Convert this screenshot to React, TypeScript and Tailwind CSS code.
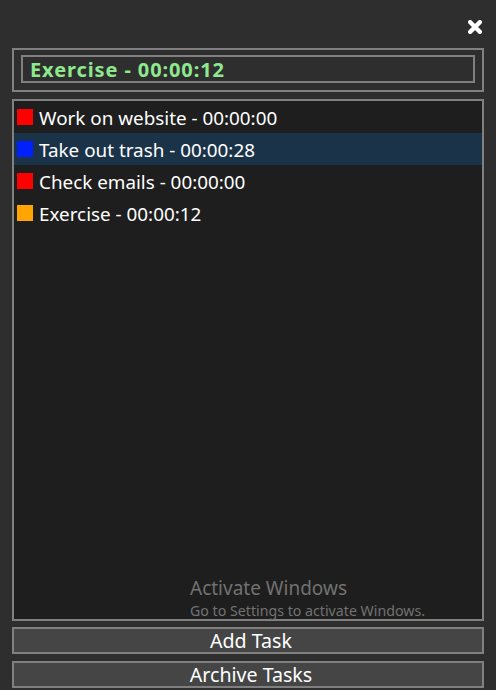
import React from "react";

const tasks = [
  { name: "Work on website - 00:00:00", color: "bg-[#ff0000]", active: false },
  { name: "Take out trash - 00:00:28", color: "bg-[#0020ff]", active: true },
  { name: "Check emails - 00:00:00", color: "bg-[#ff0000]", active: false },
  { name: "Exercise - 00:00:12", color: "bg-[#ffa500]", active: false },
];

export default function App() {
  return (
    <div
      className="w-[496px] h-[690px] overflow-hidden bg-[#2e2e2e] flex flex-col px-[12px] relative"
      style={{ fontFamily: '"Noto Sans", "Open Sans", sans-serif' }}
    >
      <div className="h-[48px] flex justify-end items-start pt-[20px] pr-[2px]">
        <svg width="14" height="14" viewBox="0 0 14 14">
          <path d="M2.2 2.2 L11.8 11.8 M11.8 2.2 L2.2 11.8" stroke="#ffffff" strokeWidth="4.4" strokeLinecap="square" />
        </svg>
      </div>
      <div className="h-[44px] border-2 border-[#808080] px-[7px] pt-[5px]">
        <div className="h-[28px] border-2 border-[#808080] flex items-center pl-[7px] pt-[1px]">
          <span className="text-[#8ee88e] font-bold text-[20px] tracking-[0.9px] leading-none">Exercise - 00:00:12</span>
        </div>
      </div>
      <div className="mt-[7px] h-[522px] shrink-0 border-2 border-[#808080] bg-[#1e1e1e] flex flex-col">
        {tasks.map((t) => (
          <div
            key={t.name}
            className={`h-[32px] flex items-center pl-[3px] ${t.active ? "bg-[#1b3349]" : ""}`}
          >
            <div className={`w-[16px] h-[16px] ${t.color}`} />
            <span className="ml-[6px] pt-[3px] text-white text-[18.85px] leading-none">{t.name}</span>
          </div>
        ))}
      </div>
      <div className="absolute left-[190px] top-[579px] flex flex-col text-[#727272] leading-none">
        <span className="text-[19px]">Activate Windows</span>
        <span className="text-[14.2px] mt-[6px]">Go to Settings to activate Windows.</span>
      </div>
      <div className="mt-[6px] h-[27px] shrink-0 border-2 border-[#808080] bg-[#454545] flex items-center justify-center pl-[6px] text-white text-[19.6px] leading-none">
        Add Task
      </div>
      <div className="mt-[7px] h-[27px] shrink-0 border-2 border-[#808080] bg-[#454545] flex items-center justify-center pl-[6px] text-white text-[19.6px] leading-none">
        Archive Tasks
      </div>
    </div>
  );
}
